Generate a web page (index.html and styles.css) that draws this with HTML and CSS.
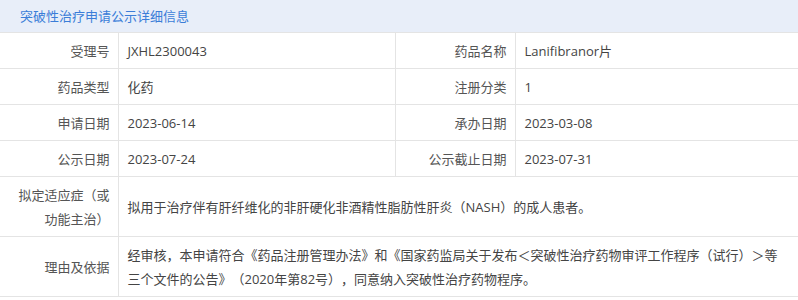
FILE: index.html
```html
<!DOCTYPE html>
<html lang="zh-CN">
<head>
<meta charset="utf-8">
<title>突破性治疗申请公示详细信息</title>
<link rel="stylesheet" href="styles.css">
</head>
<body>
<div class="panel">
  <div class="panel-head">突破性治疗申请公示详细信息</div>
  <table class="detail">
    <colgroup>
      <col class="c-label1">
      <col class="c-value1">
      <col class="c-label2">
      <col class="c-value2">
    </colgroup>
    <tbody>
      <tr>
        <th>受理号</th><td>JXHL2300043</td>
        <th>药品名称</th><td>Lanifibranor片</td>
      </tr>
      <tr>
        <th>药品类型</th><td>化药</td>
        <th>注册分类</th><td>1</td>
      </tr>
      <tr>
        <th>申请日期</th><td>2023-06-14</td>
        <th>承办日期</th><td>2023-03-08</td>
      </tr>
      <tr>
        <th>公示日期</th><td>2023-07-24</td>
        <th>公示截止日期</th><td>2023-07-31</td>
      </tr>
      <tr>
        <th>拟定适应症（或功能主治）</th>
        <td colspan="3">拟用于治疗伴有肝纤维化的非肝硬化非酒精性脂肪性肝炎（NASH）的成人患者。</td>
      </tr>
      <tr>
        <th>理由及依据</th>
        <td colspan="3">经审核，本申请符合《药品注册管理办法》和《国家药监局关于发布＜突破性治疗药物审评工作程序（试行）＞等三个文件的公告》（2020年第82号），同意纳入突破性治疗药物程序。</td>
      </tr>
    </tbody>
  </table>
</div>
</body>
</html>
```

FILE: styles.css
```css
html, body {
  margin: 0;
  padding: 0;
  background: #ffffff;
}

body {
  font-family: "Open Sans", "Noto Sans CJK SC", sans-serif;
  font-size: 13px;
  color: #444;
  text-spacing-trim: space-all;
}

.panel {
  width: 798px;
}

.panel-head {
  height: 32px;
  line-height: 32px;
  padding-left: 20px;
  background: #e8eef9;
  color: #3b7dd8;
  font-size: 13px;
}

.detail {
  width: 798px;
  border-collapse: collapse;
  table-layout: fixed;
}

.c-label1 { width: 118px; }
.c-value1 { width: 277px; }
.c-label2 { width: 120px; }
.c-value2 { width: 283px; }

.detail th,
.detail td {
  border-top: 1px solid #e4e4e4;
  border-bottom: 1px solid #e4e4e4;
  border-right: 1px solid #e4e4e4;
  line-height: 24px;
  padding: 5.5px 9px;
  vertical-align: middle;
  word-break: break-all;
  text-spacing-trim: space-all;
}

.detail tr > :last-child {
  border-right: none;
}

.detail th {
  font-weight: normal;
  text-align: right;
  color: #555;
  padding-right: 8px;
}

.detail td {
  text-align: left;
  color: #444;
}
```
